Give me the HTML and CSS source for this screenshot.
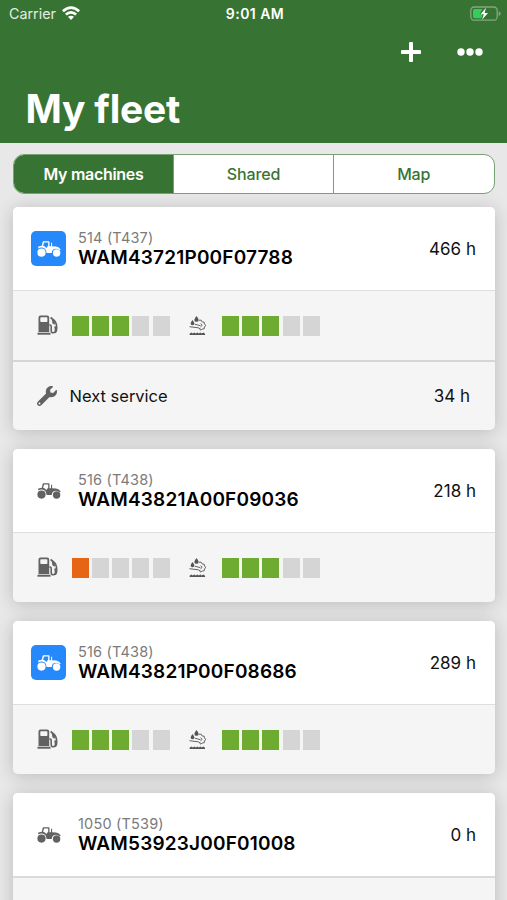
FILE: index.html
```html
<!DOCTYPE html>
<html lang="en">
<head>
<meta charset="utf-8">
<title>My fleet</title>
<link rel="stylesheet" href="styles.css">
</head>
<body>
<svg class="defs" aria-hidden="true">
  <symbol id="tractor" viewBox="0 0 24 16">
    <path fill-rule="evenodd" d="M1.2 5.600 4.800 4.700 5.700.800Q5.900.200 6.600.200h5.200q.7 0 .7.700v4.400h1.500V1.800h1.100v3.500l4 .3q3.200.3 4.700 3.200l-1 .4q-1.500-1.500-3.600-1.500-4 0-4.900 4.100H9.400Q9.200 7 5 6.600 2.800 6.500 1.300 7.600ZM7.100 1.400 6.100 4.800q2 .5 3.300 2.100l1.800-2.500v-3Z"/>
    <circle cx="4.500" cy="11.600" r="4.100"/>
    <circle cx="19.600" cy="12" r="3.700"/>
    <path d="M10 8h5.500l-.8 4h-4.500Z"/>
  </symbol>
  <symbol id="fuel" viewBox="0 0 21 21">
    <path fill-rule="evenodd" d="M1.500 17V2.500Q1.500.5 3.500.5h6.700q2 0 2 2V17ZM4 2.300q-.7 0-.7.700v3.300q0 .7.7.7h5.700q.7 0 .7-.7V3q0-.7-.7-.7Z"/>
    <rect x=".5" y="17.700" width="13" height="2"/>
    <path class="line" d="M12.300 10h.7q1.200 0 1.200 1.500v4q0 2.300 2 2.300 2.300 0 2.300-2.500 0-1.800-.6-3.800M13.600 2.500l3.300 2.600q2.800 2.700 2.800 7.500 0 4-1.500 5"/>
    <path d="m14.600 3.400 2.900 2.200.5 4.200-2.500-1.300Z"/>
  </symbol>
  <symbol id="fluid" viewBox="0 0 18 20">
    <path d="M7.500 0q2.200 2.700 2.200 3.900 0 1.900-2.200 1.900T5.300 3.900Q5.300 2.700 7.500 0ZM3.500 4q1.900 2.500 1.900 3.600 0 1.700-1.900 1.700T1.600 7.600Q1.600 6.500 3.500 4Z"/>
    <path class="thin" d="M10 4.200h2.200l1 1.800 2 .2.200 2L17 9.500l-1.600 1.300-.2 2-2 .2-1.200 1.200-1.700-1.400M5.800 8.200l5.600 1.500M.5 10.700l8.700 1.100 2.300 1.100M11.500 7.700l1.700 1.600-1.700 1.500"/>
    <path d="m.5 19 .3-1.600 1.500-.9 1.500.9 1.500-.9 1.500.9 1.500-.9 1.500.9 1.500-.9 1.500.9 1.500-.9 1.500.9.4 1.600Z"/>
  </symbol>
  <symbol id="wrench" viewBox="0 0 512 512">
    <path d="M507.700 109.100c-2.200-9-13.500-12.100-20.100-5.500l-74.400 74.400-67.900-11.300-11.300-67.900 74.400-74.400c6.600-6.600 3.400-17.900-5.700-20.200-47.400-11.700-99.600.9-136.600 37.900-39.600 39.600-50.500 97.100-34.100 147.200L18.700 402.800c-25 25-25 65.500 0 90.500s65.500 25 90.500 0l213.200-213.200c50.100 16.700 107.500 5.700 147.400-34.200 37.100-37.100 49.700-89.300 37.900-136.800ZM64 472c-13.200 0-24-10.700-24-24s10.700-24 24-24 24 10.700 24 24-10.700 24-24 24Z"/>
  </symbol>
</svg>
<header class="header">
  <div class="status">
    <div class="carrier">
      <span>Carrier</span>
      <svg class="wifi" viewBox="0 0 18 14"><path d="M0 4.200Q9-3.800 18 4.200L16.200 6.200Q9-.3 1.800 6.200ZM3 7.500q6-5 12 0l-1.800 2q-4.200-3.400-8.400 0ZM6 10.800q3-2.300 6 0L9 14Z"/></svg>
    </div>
    <div class="clock">9:01 AM</div>
    <svg class="battery" viewBox="0 0 31 16">
      <rect class="shell" x=".8" y="1" width="26.400" height="13.200" rx="3.500"/>
      <path class="tip" d="M28.700 5.300q2 .7 2 2.300t-2 2.300Z"/>
      <path class="charge" d="M4.700 3h7.800L9.700 8.200h2.800L11.500 12.300H4.700q-1.700 0-1.700-1.700V4.700Q3 3 4.700 3Z"/>
      <path class="bolt" d="M16 1.800 10.500 8.300h3.300L12 13.700l6-6.800h-3.400Z"/>
    </svg>
  </div>
  <div class="actions">
    <svg class="plus" viewBox="0 0 20 20"><path d="M10 1.500v17M1.500 10h17"/></svg>
    <svg class="more" viewBox="0 0 26 8"><circle cx="4" cy="4" r="3.700"/><circle cx="13" cy="4" r="3.700"/><circle cx="22" cy="4" r="3.700"/></svg>
  </div>
  <h1>My fleet</h1>
</header>
<nav class="tabs">
  <div class="tab active">My machines</div>
  <div class="tab">Shared</div>
  <div class="tab">Map</div>
</nav>
<main class="list">
  <section class="card">
    <div class="machine">
      <div class="avatar online"><svg><use href="#tractor"/></svg></div>
      <div class="name"><div class="model">514 (T437)</div><div class="serial">WAM43721P00F07788</div></div>
      <div class="hours">466 h</div>
    </div>
    <div class="levels">
      <svg class="fuel"><use href="#fuel"/></svg>
      <div class="gauge"><i class="on"></i><i class="on"></i><i class="on"></i><i></i><i></i></div>
      <svg class="fluid"><use href="#fluid"/></svg>
      <div class="gauge"><i class="on"></i><i class="on"></i><i class="on"></i><i></i><i></i></div>
    </div>
    <div class="service">
      <svg class="wrench"><use href="#wrench"/></svg>
      <div class="label">Next service</div>
      <div class="due">34 h</div>
    </div>
  </section>
  <section class="card">
    <div class="machine">
      <div class="avatar"><svg><use href="#tractor"/></svg></div>
      <div class="name"><div class="model">516 (T438)</div><div class="serial">WAM43821A00F09036</div></div>
      <div class="hours">218 h</div>
    </div>
    <div class="levels">
      <svg class="fuel"><use href="#fuel"/></svg>
      <div class="gauge"><i class="low"></i><i></i><i></i><i></i><i></i></div>
      <svg class="fluid"><use href="#fluid"/></svg>
      <div class="gauge"><i class="on"></i><i class="on"></i><i class="on"></i><i></i><i></i></div>
    </div>
  </section>
  <section class="card">
    <div class="machine">
      <div class="avatar online"><svg><use href="#tractor"/></svg></div>
      <div class="name"><div class="model">516 (T438)</div><div class="serial">WAM43821P00F08686</div></div>
      <div class="hours">289 h</div>
    </div>
    <div class="levels">
      <svg class="fuel"><use href="#fuel"/></svg>
      <div class="gauge"><i class="on"></i><i class="on"></i><i class="on"></i><i></i><i></i></div>
      <svg class="fluid"><use href="#fluid"/></svg>
      <div class="gauge"><i class="on"></i><i class="on"></i><i class="on"></i><i></i><i></i></div>
    </div>
  </section>
  <section class="card last">
    <div class="machine">
      <div class="avatar"><svg><use href="#tractor"/></svg></div>
      <div class="name"><div class="model">1050 (T539)</div><div class="serial">WAM53923J00F01008</div></div>
      <div class="hours">0 h</div>
    </div>
    <div class="levels"></div>
  </section>
</main>
</body>
</html>
```
FILE: styles.css
```css
* { box-sizing: border-box; }
body {
  display: flex;
  flex-direction: column;
  margin: 0;
  height: 900px;
  overflow: hidden;
  background: #e8e8e8;
  font-family: Inter, "Liberation Sans", sans-serif;
  color: #111;
}
.defs { display: none; }
svg { display: block; flex: none; }

.header { flex: none; height: 143px; background: #377434; color: #fff; }
.status {
  display: grid;
  grid-template-columns: 1fr auto 1fr;
  align-items: center;
  height: 28px;
  padding: 0 6px 0 9px;
}
.carrier { display: flex; align-items: center; gap: 6px; font-size: 14.300px; line-height: 28px; color: #e2ece1; }
.wifi { width: 18px; height: 14px; fill: #fff; margin-top: -2px; }
.clock { font-size: 14px; font-weight: 600; letter-spacing: 0.45px; margin-top: -1px; }
.battery { width: 31px; height: 16px; justify-self: end; margin-top: -1px; }
.shell { fill: none; stroke: #82a87f; stroke-width: 1.3; }
.tip { fill: #82a87f; }
.charge { fill: #34cc5d; }
.bolt { fill: #fff; }
.actions {
  display: flex;
  align-items: center;
  justify-content: flex-end;
  gap: 36px;
  height: 47px;
  padding-right: 24px;
}
.plus { width: 20px; height: 20px; fill: none; stroke: #fff; stroke-width: 4; stroke-linecap: round; }
.more { width: 26px; height: 8px; fill: #fff; }
h1 { margin: 10px 0 0 25.500px; font-size: 39px; line-height: 48px; font-weight: 700; letter-spacing: -0.2px; }

.tabs {
  flex: none;
  display: grid;
  grid-template-columns: 159px 160px 1fr;
  height: 40px;
  margin: 11px 12.500px 13px 13px;
  background: #fff;
  border: 1px solid #78a276;
  border-radius: 11px;
  overflow: hidden;
}
.tab { font-size: 16px; line-height: 39px; text-align: center; font-weight: 500; color: #377434; letter-spacing: -0.15px; }
.tab + .tab { border-left: 1px solid #78a276; }
.active { background: #377434; color: #fff; font-weight: 600; letter-spacing: -0.3px; }

.list {
  flex: 1;
  min-height: 0;
  display: grid;
  grid-template-rows: 223px 153px 153px 153px;
  gap: 19px;
  padding: 0 12.500px 0 13px;
}
.card { border-radius: 5px; background: #f5f5f5; box-shadow: 0 2px 18px rgba(0, 0, 0, .2); }
.machine {
  display: flex;
  align-items: center;
  height: 84px;
  padding: 0 18.500px 0 18px;
  background: #fff;
  border-radius: 5px 5px 0 0;
  border-bottom: 1px solid #dedede;
}
.avatar {
  display: flex;
  align-items: center;
  justify-content: center;
  width: 35px;
  height: 35px;
  border-radius: 5px;
  fill: #626262;
}
.avatar svg { width: 24px; height: 16px; }
.online { background: #2589fb; fill: #fff; }
.name { flex: 1; margin-left: 12px; }
.model { font-size: 14.500px; line-height: 17px; color: #7b7b7b; letter-spacing: 0.18px; }
.serial { font-size: 19px; line-height: 23px; font-weight: 600; color: #000; letter-spacing: 0.18px; }
.hours, .due { font-size: 17px; }
.levels { display: flex; align-items: center; height: 69px; padding-left: 24px; }
.fuel { width: 21px; height: 21px; margin-right: 13.500px; fill: #626262; }
.line { fill: none; stroke: #626262; stroke-width: 1.6; }
.thin { fill: none; stroke: #626262; stroke-width: 1; }
.gauge { display: flex; gap: 3.300px; }
.gauge i { width: 17px; height: 20px; background: #d5d5d5; }
.gauge .on { background: #6eac31; }
.gauge .low { background: #e86415; }
.fluid { width: 18px; height: 20px; margin: 0 14.500px 0 19.500px; fill: #555; }
.service {
  display: flex;
  align-items: center;
  height: 70px;
  padding: 0 24.500px 0 24px;
  border-top: 2px solid #d6d6d6;
}
.wrench { width: 20px; height: 20px; margin-right: 12.500px; fill: #626262; }
.label { flex: 1; font-size: 16.500px; }
.last .machine { height: 85px; border-bottom: 2px solid #dadada; }
.last .levels { height: 68px; }
```
